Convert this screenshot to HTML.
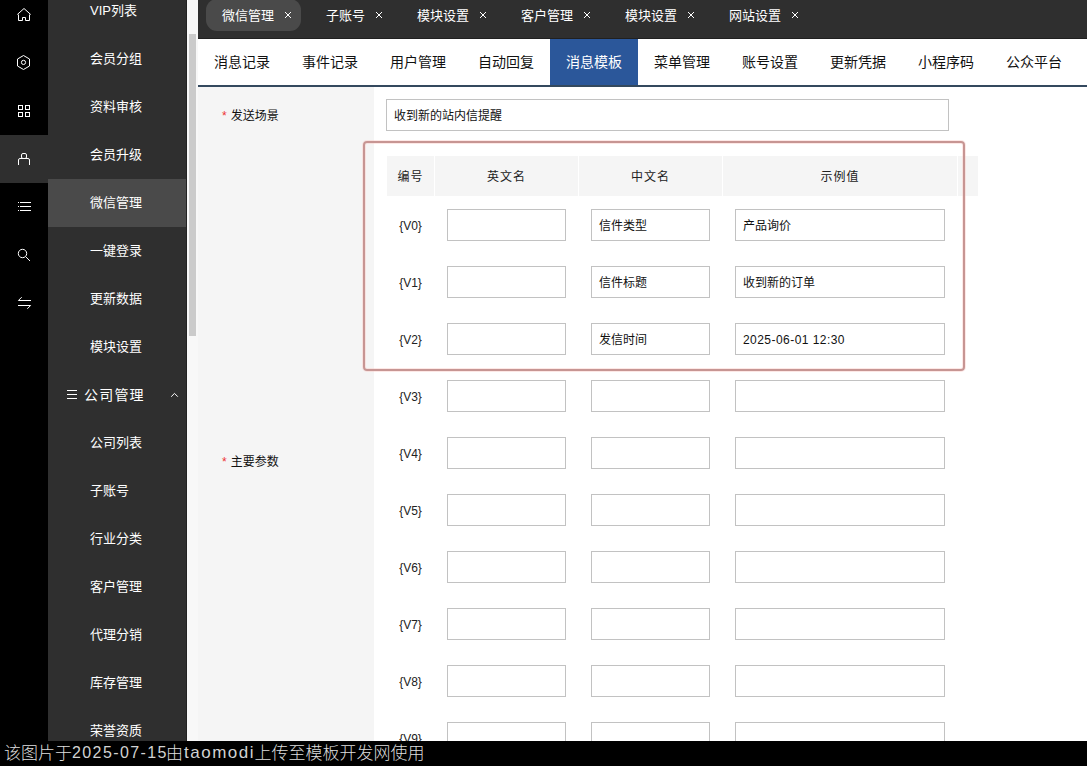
<!DOCTYPE html><html lang="zh-CN"><head><meta charset="utf-8"><title>微信管理</title><style>
*{box-sizing:border-box;margin:0;padding:0}
html,body{width:1087px;height:766px;overflow:hidden;background:#fff}
body{position:relative;font-family:"Liberation Sans","Noto Sans CJK SC",sans-serif;font-size:12px;color:#111}
.abs{position:absolute}
#iconbar{left:0;top:0;width:48px;height:766px;background:#000}
#iconbar .act{left:0;top:135px;width:48px;height:48px;background:#2f2f2f}
#iconbar svg{position:absolute;left:16px;width:16px;height:16px;overflow:visible}
#menu{left:48px;top:0;width:139px;height:766px;background:#2f2f2f;border-right:1px solid #222;color:#fff;font-size:13px}
#menu .it{position:absolute;left:0;width:138px;height:48px;line-height:48px;padding-left:42px;white-space:nowrap}
#menu .it.on{background:#4a4a4a}
#menu .grp{position:absolute;left:0;top:371px;width:138px;height:48px;line-height:48px;font-size:14px;letter-spacing:1.2px;padding-left:36px}
#track{left:187px;top:0;width:11px;height:766px;background:#f8f8f8}
#thumb{left:189px;top:34px;width:7px;height:302px;background:#cbcbcb}
#topbar{left:198px;top:0;width:889px;height:39px;background:#2f2f2f;border-bottom:1px solid #202020;color:#fff;font-size:13px}
#topbar .pill{position:absolute;left:8px;top:-1px;width:95px;height:32px;border-radius:11px;background:#4a4a4a}
#topbar .t{position:absolute;top:0;height:31px;line-height:31px;white-space:nowrap}
#topbar .x{position:absolute;top:11px;width:8px;height:8px}
#subbar{left:198px;top:39px;width:889px;height:48px;background:#fff;border-bottom:2px solid #34495e;font-size:14px;color:#111}
#subbar .s{position:absolute;top:0;width:88px;height:46px;line-height:47px;text-align:center}
#subbar .s.on{background:#2b579a;color:#fff}
#labcol{left:198px;top:87px;width:176px;height:679px;background:#f5f5f5}
.lab{position:absolute;left:222px;height:20px;line-height:20px;font-size:12px;color:#111;white-space:nowrap}
.lab i{font-style:normal;color:#e33;margin-right:4px}
input,.inp{position:absolute;height:32px;border:1px solid #c2c2c2;background:#fff;font-size:12px;line-height:32px;padding:0 7px;color:#111;white-space:nowrap;overflow:hidden}
.th{position:absolute;top:156px;height:40px;line-height:42px;background:#f5f5f5;text-align:center;color:#222;font-size:12px;letter-spacing:1px}
.vn{position:absolute;left:387px;width:47px;text-align:center;height:32px;line-height:34px;font-size:12px;color:#222}
#red{left:363px;top:141px;width:602px;height:230px;border:2px solid #c79593;border-radius:4px;box-shadow:0 0 0 1px rgba(250,205,200,.45), inset 0 0 0 1px rgba(250,205,200,.45)}
#wm{left:0;top:741px;width:1087px;height:25px;background:#000;color:#dedede;font-family:"Liberation Sans","Noto Sans CJK SC",sans-serif;font-size:17px;font-weight:300;line-height:22px;white-space:nowrap}
#wm span{position:absolute;top:2px}#wm b{position:absolute;top:1px}
#wm b{font-weight:400;font-size:16px;letter-spacing:1.4px;color:#d2d2d2}#wm b.l{font-size:17px;letter-spacing:1.5px}
</style></head><body>
<div id="labcol" class="abs"></div>
<div class="lab" style="top:106px"><i>*</i>发送场景</div>
<div class="lab" style="top:452px"><i>*</i>主要参数</div>
<div class="inp" style="left:386px;top:99px;width:563px">收到新的站内信提醒</div>
<div class="th" style="left:387px;width:47px">编号</div>
<div class="th" style="left:435px;width:143px">英文名</div>
<div class="th" style="left:579px;width:143px">中文名</div>
<div class="th" style="left:723px;width:234px">示例值</div>
<div class="th" style="left:958px;width:20px"></div>
<div class="vn" style="top:209px">{V0}</div>
<div class="inp" style="left:447px;top:209px;width:119px"></div>
<div class="inp" style="left:591px;top:209px;width:119px">信件类型</div>
<div class="inp" style="left:735px;top:209px;width:210px">产品询价</div>
<div class="vn" style="top:266px">{V1}</div>
<div class="inp" style="left:447px;top:266px;width:119px"></div>
<div class="inp" style="left:591px;top:266px;width:119px">信件标题</div>
<div class="inp" style="left:735px;top:266px;width:210px">收到新的订单</div>
<div class="vn" style="top:323px">{V2}</div>
<div class="inp" style="left:447px;top:323px;width:119px"></div>
<div class="inp" style="left:591px;top:323px;width:119px">发信时间</div>
<div class="inp" style="left:735px;top:323px;width:210px"><span style="letter-spacing:0.45px">2025-06-01 12:30</span></div>
<div class="vn" style="top:380px">{V3}</div>
<div class="inp" style="left:447px;top:380px;width:119px"></div>
<div class="inp" style="left:591px;top:380px;width:119px"></div>
<div class="inp" style="left:735px;top:380px;width:210px"></div>
<div class="vn" style="top:437px">{V4}</div>
<div class="inp" style="left:447px;top:437px;width:119px"></div>
<div class="inp" style="left:591px;top:437px;width:119px"></div>
<div class="inp" style="left:735px;top:437px;width:210px"></div>
<div class="vn" style="top:494px">{V5}</div>
<div class="inp" style="left:447px;top:494px;width:119px"></div>
<div class="inp" style="left:591px;top:494px;width:119px"></div>
<div class="inp" style="left:735px;top:494px;width:210px"></div>
<div class="vn" style="top:551px">{V6}</div>
<div class="inp" style="left:447px;top:551px;width:119px"></div>
<div class="inp" style="left:591px;top:551px;width:119px"></div>
<div class="inp" style="left:735px;top:551px;width:210px"></div>
<div class="vn" style="top:608px">{V7}</div>
<div class="inp" style="left:447px;top:608px;width:119px"></div>
<div class="inp" style="left:591px;top:608px;width:119px"></div>
<div class="inp" style="left:735px;top:608px;width:210px"></div>
<div class="vn" style="top:665px">{V8}</div>
<div class="inp" style="left:447px;top:665px;width:119px"></div>
<div class="inp" style="left:591px;top:665px;width:119px"></div>
<div class="inp" style="left:735px;top:665px;width:210px"></div>
<div class="vn" style="top:722px">{V9}</div>
<div class="inp" style="left:447px;top:722px;width:119px"></div>
<div class="inp" style="left:591px;top:722px;width:119px"></div>
<div class="inp" style="left:735px;top:722px;width:210px"></div>
<div id="red" class="abs"></div>
<div id="subbar" class="abs">
<div class="s" style="left:0px">消息记录</div>
<div class="s" style="left:88px">事件记录</div>
<div class="s" style="left:176px">用户管理</div>
<div class="s" style="left:264px">自动回复</div>
<div class="s on" style="left:352px">消息模板</div>
<div class="s" style="left:440px">菜单管理</div>
<div class="s" style="left:528px">账号设置</div>
<div class="s" style="left:616px">更新凭据</div>
<div class="s" style="left:704px">小程序码</div>
<div class="s" style="left:792px">公众平台</div>
</div>
<div id="topbar" class="abs"><div class="pill"></div>
<div class="t" style="left:24px">微信管理</div>
<svg class="x" style="left:86px" viewBox="0 0 8 8"><path d="M1 1L7 7M7 1L1 7" stroke="#fff" stroke-width="1" fill="none"/></svg>
<div class="t" style="left:128px">子账号</div>
<svg class="x" style="left:177px" viewBox="0 0 8 8"><path d="M1 1L7 7M7 1L1 7" stroke="#fff" stroke-width="1" fill="none"/></svg>
<div class="t" style="left:219px">模块设置</div>
<svg class="x" style="left:281px" viewBox="0 0 8 8"><path d="M1 1L7 7M7 1L1 7" stroke="#fff" stroke-width="1" fill="none"/></svg>
<div class="t" style="left:323px">客户管理</div>
<svg class="x" style="left:385px" viewBox="0 0 8 8"><path d="M1 1L7 7M7 1L1 7" stroke="#fff" stroke-width="1" fill="none"/></svg>
<div class="t" style="left:427px">模块设置</div>
<svg class="x" style="left:489px" viewBox="0 0 8 8"><path d="M1 1L7 7M7 1L1 7" stroke="#fff" stroke-width="1" fill="none"/></svg>
<div class="t" style="left:531px">网站设置</div>
<svg class="x" style="left:593px" viewBox="0 0 8 8"><path d="M1 1L7 7M7 1L1 7" stroke="#fff" stroke-width="1" fill="none"/></svg>
</div>
<div id="track" class="abs"></div><div id="thumb" class="abs"></div>
<div id="menu" class="abs">
<div class="it" style="top:-13px">VIP列表</div>
<div class="it" style="top:35px">会员分组</div>
<div class="it" style="top:83px">资料审核</div>
<div class="it" style="top:131px">会员升级</div>
<div class="it on" style="top:179px">微信管理</div>
<div class="it" style="top:227px">一键登录</div>
<div class="it" style="top:275px">更新数据</div>
<div class="it" style="top:323px">模块设置</div>
<div class="it" style="top:419px">公司列表</div>
<div class="it" style="top:467px">子账号</div>
<div class="it" style="top:515px">行业分类</div>
<div class="it" style="top:563px">客户管理</div>
<div class="it" style="top:611px">代理分销</div>
<div class="it" style="top:659px">库存管理</div>
<div class="it" style="top:707px">荣誉资质</div>
<div class="grp">公司管理</div>
<svg class="abs" style="left:19px;top:389px;width:11px;height:12px" viewBox="0 0 11 12"><path d="M0 1.5H10M0 5.5H10M0 9.5H10" stroke="#fff" stroke-width="1" fill="none"/></svg>
<svg class="abs" style="left:122px;top:391px;width:9px;height:7px" viewBox="0 0 9 7"><path d="M1.2 5.7L4.5 2.4L7.8 5.7" stroke="#fff" stroke-width="1" fill="none"/></svg>
</div>
<div id="iconbar" class="abs"><div class="act abs"></div>
<svg style="top:7px" viewBox="0 0 16 16"><path d="M1.3 7.5L8 1.5L14.7 7.5M2.5 7.5V13.5H6.5V10.5H9.5V13.5H13.5V7.5" stroke="#fff" stroke-width="1" fill="none"/></svg>
<svg style="top:55px" viewBox="0 0 16 16"><path d="M7.5 0.5L13.5 4V11L7.5 14.5L1.5 11V4Z" stroke="#fff" stroke-width="1" fill="none" stroke-linejoin="round"/><circle cx="7.5" cy="7.4" r="2.1" stroke="#fff" stroke-width="1" fill="none"/></svg>
<svg style="top:103px" viewBox="0 0 16 16"><rect x="2.5" y="2.5" width="4" height="4" stroke="#fff" stroke-width="1" fill="none"/><rect x="9.5" y="2.5" width="4" height="4" stroke="#fff" stroke-width="1" fill="none"/><rect x="2.5" y="9.5" width="4" height="4" stroke="#fff" stroke-width="1" fill="none"/><rect x="9.5" y="9.5" width="4" height="4" stroke="#fff" stroke-width="1" fill="none"/></svg>
<svg style="top:151px" viewBox="0 0 16 16"><rect x="5.5" y="2.5" width="5" height="5" rx="1.5" stroke="#fff" stroke-width="1" fill="none"/><path d="M2.5 14V9Q2.5 7.5 4 7.5H12Q13.5 7.5 13.5 9V14" stroke="#fff" stroke-width="1" fill="none"/></svg>
<svg style="top:199px" viewBox="0 0 16 16"><path d="M4 3.5H15M4 7.5H15M4 11.5H15M2 3.5H3M2 7.5H3M2 11.5H3" stroke="#fff" stroke-width="1" fill="none"/></svg>
<svg style="top:247px" viewBox="0 0 16 16"><circle cx="6.5" cy="6.5" r="4.2" stroke="#fff" stroke-width="1" fill="none"/><path d="M9.6 9.6L14 14" stroke="#fff" stroke-width="1" fill="none"/></svg>
<svg style="top:295px" viewBox="0 0 16 16"><path d="M15 5.5H2.4L5.7 2.2M2 10.5H14.6L11.3 13.8" stroke="#fff" stroke-width="1" fill="none"/></svg>
</div>
<div id="wm" class="abs"><span style="left:4px">该图片于</span><b style="left:72px">2025-07-15</b><span style="left:166px">由</span><b class="l" style="left:184px">taomodi</b><span style="left:254.5px">上传至模板开发网使用</span></div>
</body></html>
